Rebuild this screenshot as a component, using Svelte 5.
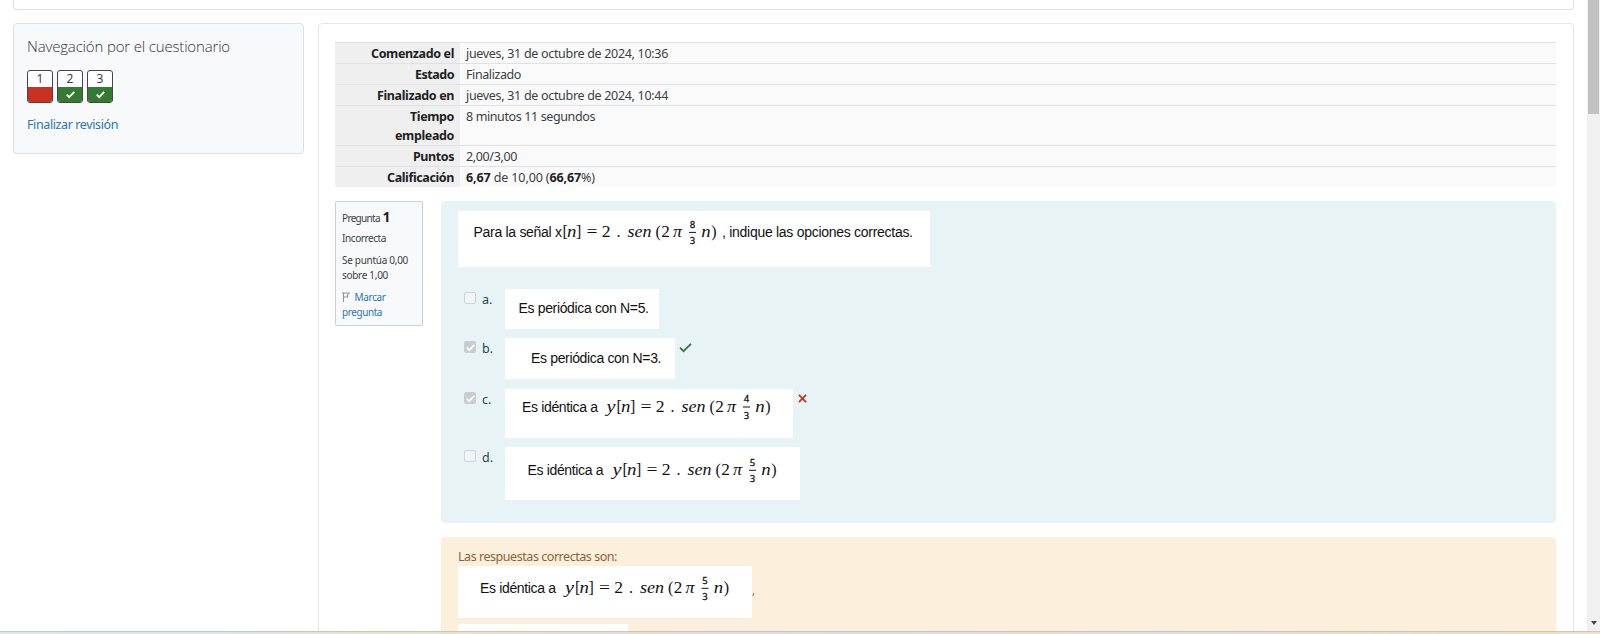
<script>
  const rows = [
    { k: ['Comenzado el'], v: 'jueves, 31 de octubre de 2024, 10:36', h: 21, kw: 83, vw: 202 },
    { k: ['Estado'], v: 'Finalizado', h: 21, kw: 39, vw: 55 },
    { k: ['Finalizado en'], v: 'jueves, 31 de octubre de 2024, 10:44', h: 21, kw: 77, vw: 202 },
    { k: ['Tiempo', 'empleado'], v: '8 minutos 11 segundos', h: 40, kw: 44, vw: 129 },
    { k: ['Puntos'], v: '2,00/3,00', h: 21, kw: 41, vw: 51 },
    { k: ['Calificación'], v: null, h: 21, kw: 67, vw: 129 }
  ];
  const options = [
    { l: 'a.', checked: false, w: 154, h: 40, gap: 9, text: 'Es periódica con N=5.', tx: 13.5, ty: 24.3, tw: 130.5 },
    { l: 'b.', checked: true, w: 170, h: 41, gap: 10, text: 'Es periódica con N=3.', tx: 26, ty: 25.3, tw: 130.5, mark: 'ok' },
    { l: 'c.', checked: true, w: 288, h: 49, gap: 9, text: 'Es idéntica a', tx: 17, ty: 23, tw: 76, bx: 111.5, num: '4', mark: 'no' },
    { l: 'd.', checked: false, w: 295, h: 53, gap: 0, text: 'Es idéntica a', tx: 22.5, ty: 28.3, tw: 76, bx: 117.5, num: '5' }
  ];

  // Condenses or stretches a run of text so that its line is exactly `w` wide.
  function fit(node, w) {
    const n = node.textContent.length;
    const now = node.getBoundingClientRect().width;
    node.style.letterSpacing = (w - now) / n + 'px';
  }
</script>

{#snippet formula(x, y, num, withY)}
  <g class="math">
    {#if withY}<text x={x - 10} {y} class="it" textLength="9" lengthAdjust="spacingAndGlyphs">y</text>{/if}
    <text {x} {y}>[</text>
    <text x={x + 4.6} {y} class="it" textLength="9.4" lengthAdjust="spacingAndGlyphs">n</text>
    <text x={x + 13.6} {y}>]</text>
    <text x={x + 24} {y} textLength="11" lengthAdjust="spacingAndGlyphs">=</text>
    <text x={x + 39.2} {y} textLength="8.8" lengthAdjust="spacingAndGlyphs">2</text>
    <text x={x + 54} {y}>.</text>
    <text x={x + 65} {y} class="it" textLength="24" lengthAdjust="spacingAndGlyphs">sen</text>
    <text x={x + 93} {y}>(</text>
    <text x={x + 98.8} {y} textLength="8.6" lengthAdjust="spacingAndGlyphs">2</text>
    <text x={x + 110.5} {y} class="it" textLength="9" lengthAdjust="spacingAndGlyphs">π</text>
    <text x={x + 127.2} y={y - 9.6} class="fr">{num}</text>
    <rect x={x + 126.5} y={y - 5.5} width="7" height="1" />
    <text x={x + 127.2} y={y + 7} class="fr">3</text>
    <text x={x + 138.8} {y} class="it" textLength="9.4" lengthAdjust="spacingAndGlyphs">n</text>
    <text x={x + 148.8} {y}>)</text>
  </g>
{/snippet}

{#snippet tick(size, color)}
  <svg width={size} height={size} viewBox="0 0 12 12"><path d="M1 6.2 4.3 9.5 11 2.6" fill="none" stroke={color} stroke-width="2.4" /></svg>
{/snippet}

<div class="page">
  <div class="content">
    <div class="topcard"></div>
    <div class="cols">
      <aside>
        <h5><span use:fit={203}>Navegación por el cuestionario</span></h5>
        <div class="quiz">
          {#each [1, 2, 3] as q}
            <a class="qn" class:good={q > 1}><span>{q}</span><i>{#if q > 1}{@render tick(9, '#fff')}{/if}</i></a>
          {/each}
        </div>
        <a class="link"><span use:fit={91}>Finalizar revisión</span></a>
      </aside>
      <main>
        <div class="summary">
          {#each rows as r}
            <div class="row" style:height="{r.h}px">
              <div class="key">{#each r.k as t, i}<div><span use:fit={i ? 59 : r.kw}>{t}</span></div>{/each}</div>
              <div class="val">
                {#if r.v}<span use:fit={r.vw}>{r.v}</span>{:else}<span use:fit={r.vw}><b>6,67</b> de 10,00 (<b>66,67</b>%)</span>{/if}
              </div>
            </div>
          {/each}
        </div>
        <div class="que">
          <div class="info">
            <div class="no"><span use:fit={38}>Pregunta</span> <b>1</b></div>
            <div class="state"><span use:fit={44}>Incorrecta</span></div>
            <div class="grade"><span use:fit={66}>Se puntúa 0,00</span><br /><span use:fit={46}>sobre 1,00</span></div>
            <div class="flag">
              <svg width="8" height="10" viewBox="0 0 8 10"><path d="M1.5 10V1M0 1H7.5L5 3 6 5H1.5" fill="none" stroke="#8d9297" stroke-width="1" /></svg>
              <span use:fit={31}>Marcar</span><br /><span use:fit={40}>pregunta</span>
            </div>
          </div>
          <div class="body">
            <section class="formulation">
              <svg class="pic" width="472" height="56">
                <text x="15.5" y="26.4" textLength="88.5">Para la señal x</text>
                {@render formula(104.5, 26.4, '8', false)}
                <text x="264" y="26.4" textLength="191">, indique las opciones correctas.</text>
              </svg>
              <div class="answers">
                {#each options as o}
                  <div class="opt" style:margin-bottom="{o.gap}px">
                    <span class="box" class:checked={o.checked}>{#if o.checked}{@render tick(9, '#fff')}{/if}</span>
                    <span class="letter">{o.l}</span>
                    <svg class="pic" width={o.w} height={o.h}>
                      <text x={o.tx} y={o.ty} textLength={o.tw}>{o.text}</text>
                      {#if o.num}{@render formula(o.bx, o.ty, o.num, true)}{/if}
                    </svg>
                    {#if o.mark === 'ok'}
                      <svg class="mark" width="13" height="10" viewBox="0 0 13 10"><path d="M1 4.7 4.5 8.2 12 .9" fill="none" stroke="#357a32" stroke-width="1.8" /></svg>
                    {:else if o.mark === 'no'}
                      <svg class="mark x" width="9" height="9" viewBox="0 0 10 10"><path d="M1 1 9 9M9 1 1 9" fill="none" stroke="#ca3120" stroke-width="2" /></svg>
                    {/if}
                  </div>
                {/each}
              </div>
            </section>
            <section class="outcome">
              <p><span use:fit={159}>Las respuestas correctas son:</span></p>
              <div class="right">
                <svg class="pic" width="294" height="52">
                  <text x="22" y="27.3" textLength="76">Es idéntica a</text>
                  {@render formula(117, 27.3, '5', true)}
                </svg><span class="comma">,</span>
              </div>
              <div class="next"></div>
            </section>
          </div>
        </div>
      </main>
    </div>
  </div>
  <div class="scroll"><div class="thumb"></div><div class="arrow"></div></div>
  <div class="edge"></div>
</div>

<style>
  :global(body) { background: #fff; overflow: hidden; }
  .page { width: 1600px; height: 634px; overflow: hidden; display: grid; grid-template: 631px 3px / 1587px 13px; font: 12.5px/19px "Noto Sans", sans-serif; color: #3a3f44; }
  .content { overflow: hidden; padding: 0 13px; display: flex; flex-direction: column; }
  .topcard { flex: 0 0 10px; box-sizing: border-box; border: 1px solid #dedfe1; border-top: 0; border-radius: 0 0 4px 4px; margin-bottom: 13px; width: 1561px; }
  .cols { display: flex; gap: 14px; align-items: flex-start; }
  aside { box-sizing: border-box; width: 291px; height: 131px; border: 1px solid #dcdfe3; border-radius: 4px; background: #f8f9fb; padding: 11px 13px; }
  h5 { margin: 0; font: 300 15px/22px "Open Sans", sans-serif; color: #30363b; white-space: nowrap; }
  .quiz { display: flex; gap: 4px; margin-top: 13px; }
  .qn { box-sizing: border-box; width: 26px; height: 33px; border: 1px solid #4a4348; border-radius: 3px; overflow: hidden; background: #fff; display: flex; flex-direction: column; font-size: 12px; line-height: 16px; text-align: center; }
  .qn i { flex: 1; background: #ca3120; display: flex; align-items: center; justify-content: center; }
  .qn.good i { background: #357a32; }
  .link { display: block; margin-top: 12px; color: #2f74b5; white-space: nowrap; }
  main { box-sizing: border-box; width: 1256px; height: 640px; border: 1px solid #e6e7e9; border-radius: 4px; padding: 18px 16px; }
  .summary { width: 1221px; }
  .row { box-sizing: border-box; border-top: 1px solid #dee2e6; display: grid; grid-template-columns: 125px 1fr; line-height: 19px; white-space: nowrap; }
  .key { background: #efefef; text-align: right; font-weight: 700; color: #1d2125; padding: 1px 6px 0 0; }
  .val { background: #fafafa; padding: 1px 0 0 6px; }
  b { color: #1d2125; }
  .que { display: flex; gap: 18px; margin-top: 14px; }
  .info { box-sizing: border-box; width: 88px; height: 125px; border: 1px solid #cad0d7; border-radius: 2px; background: #f8f9fb; padding: 5px 6px; font-size: 10px; line-height: 15px; white-space: nowrap; }
  .no { line-height: 20px; height: 20px; }
  .no b { font-size: 14px; }
  .state { margin-top: 4px; }
  .grade { margin-top: 7px; }
  .flag { margin-top: 7px; color: #2f74b5; }
  .flag svg { margin: 0 2px 0 0; vertical-align: -1px; }
  .body { width: 1115px; }
  section { border-radius: 4px; box-sizing: border-box; }
  .formulation { background: #e7f3f5; height: 322px; padding: 10px 17px; }
  .pic { display: block; background: #fff; font: 14px "Liberation Sans", sans-serif; fill: #111; }
  .math { font-family: "Liberation Serif", serif; font-size: 16px; }
  .it { font-style: italic; }
  .fr { font: 400 9.5px "Noto Sans", sans-serif; stroke: #111; stroke-width: .3px; }
  .answers { margin-top: 22px; }
  .opt { display: flex; align-items: flex-start; padding-left: 6px; }
  .box { box-sizing: border-box; width: 12px; height: 12px; margin-top: 3px; border: 1px solid #cfd3d5; border-radius: 2px; background: #f0f5f6; display: flex; align-items: center; justify-content: center; }
  .box.checked { background: #c9cdcf; border-color: #c9cdcf; }
  .letter { width: 23px; margin-left: 6px; padding-top: 1px; box-sizing: border-box; color: #1f4650; }
  .mark { margin: 5px 0 0 4px; }
  .mark.x { margin-left: 5px; }
  .outcome { margin-top: 14px; background: #fcefdc; height: 120px; padding: 10px 17px; color: #8a6437; }
  p { margin: 0; line-height: 19px; white-space: nowrap; }
  .right { display: flex; }
  .comma { margin-top: 15px; font-size: 11px; }
  .next { width: 170px; height: 30px; margin-top: 6px; background: #fff; }
  .scroll { background: #f0f0f0; display: flex; flex-direction: column; align-items: center; justify-content: space-between; }
  .thumb { width: 11px; height: 114px; background: #c1c1c1; }
  .arrow { border: 3px solid transparent; border-top: 4px solid #444; border-bottom: 0; margin-bottom: 6px; }
  .edge { grid-column: 1 / 3; border-top: 1px solid #c3c9c2; background: linear-gradient(90deg, #dce7ec, #dce5e6 16%, #e8e4bd 23%, #e8e4c0 26%, #e3e0cc 38%, #dcdde0 55%, #e3e0cc 65%, #dcdfe0 73%, #e8e0bd 90%, #eee2bd); box-sizing: border-box; }
</style>
